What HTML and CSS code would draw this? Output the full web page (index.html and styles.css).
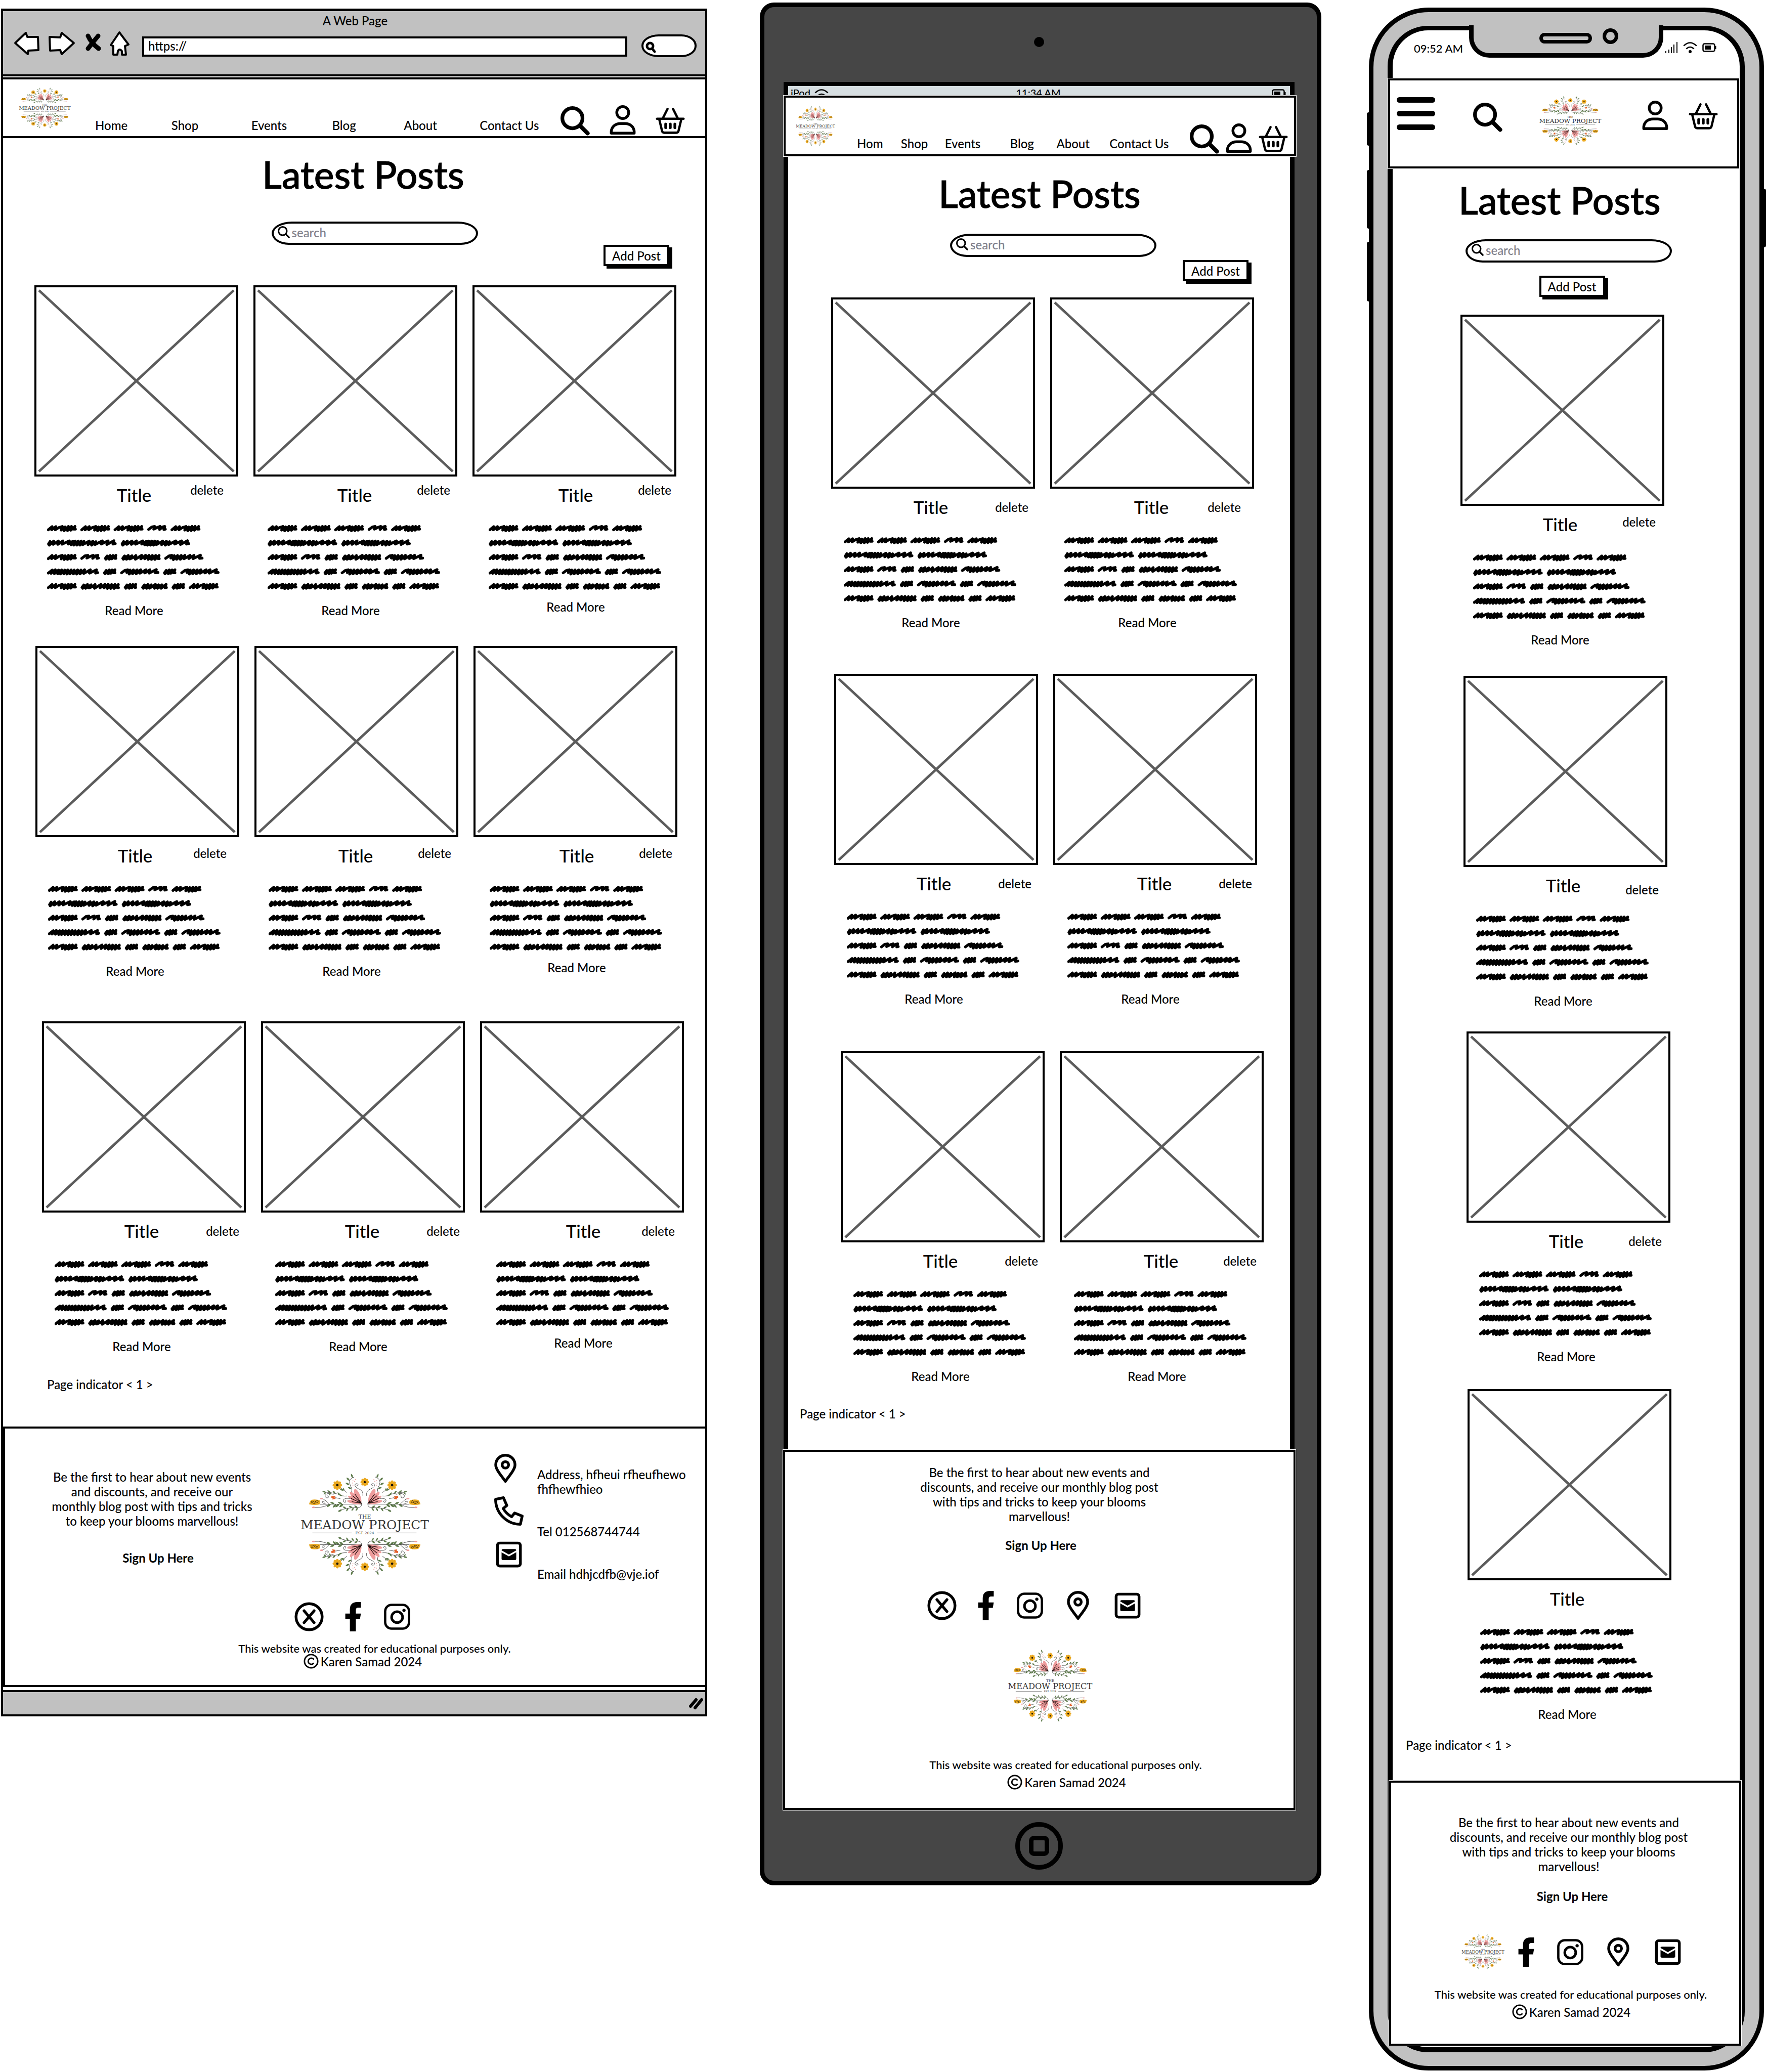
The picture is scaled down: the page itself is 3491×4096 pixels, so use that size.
FILE: index.html
```html
<!DOCTYPE html>
<html lang="en">
<head>
<meta charset="utf-8">
<title>The Meadow Project – Blog wireframes</title>
<meta name="viewport" content="width=device-width, initial-scale=1">
<link rel="stylesheet" href="styles.css">
</head>
<body>
<svg class="sprite" aria-hidden="true">
  <defs>
    <!-- scribbled words -->
    <g id="w-a"><path d="M8 31L33 10L30 31L58 10L54 31L78 16L100 9L92 33L118 12L112 37L140 9L134 36L160 9L155 34L183 9L176 27L186 27"/></g>
    <g id="w-b"><path d="M8 29L30 12L48 9L42 27L68 14L84 9L80 29L100 12L114 9L108 29L118 27"/></g>
    <g id="w-c"><path d="M10 29L22 13L14 35L42 10L36 35L60 10L52 32L79 9L72 29L79 29"/></g>
    <g id="w-d"><path d="M10 29L22 13L14 35L46 10L34 35L70 12L56 33L86 20L96 10L92 35L134 9L128 32L160 9L154 32L182 9L176 36L204 10L198 36L226 10L220 36L248 10L242 31L249 31"/></g>
    <g id="w-e"><path d="M8 29L30 13L48 9L42 27L64 11L58 37L86 10L80 35L110 10L104 35L134 9L128 32L168 9L160 30L194 9L188 31L236 8L230 29L247 27"/></g>
    <g id="w-f"><path d="M10 29L20 13L14 37L44 10L40 32L74 10L70 32L104 9L98 31L146 9L138 30L170 11L158 35L184 10L176 37L204 10L196 37L224 10L216 37L242 12L234 34L276 10L268 34L300 11L292 37L320 14L314 33L362 9L354 30L400 9L392 33L438 8L432 30L447 27"/></g>
    <g id="w-g"><path d="M8 31L34 11L26 33L54 9L48 34L76 11L70 36L96 10L88 36L116 11L110 36L136 10L130 37L158 10L150 36L178 11L172 36L200 10L194 37L222 11L216 36L246 9L240 33L284 9L278 31L324 9L318 31L332 28"/></g>
    <g id="w-h"><path d="M10 29L22 13L14 35L44 10L36 35L66 12L56 34L94 9L88 35L114 12L108 35L136 12L130 35L164 9L156 31L166 30"/></g>
  </defs>
  <symbol id="scribble" viewBox="36 46 1130 426" preserveAspectRatio="none">
    <g fill="none" stroke="#000" stroke-width="18" stroke-linejoin="round" stroke-linecap="round">
      <use href="#w-a" x="36" y="46"/><use href="#w-a" x="255" y="46"/><use href="#w-a" x="473" y="46"/><use href="#w-b" x="693" y="46"/><use href="#w-a" x="846" y="46"/>
      <use href="#w-f" x="36" y="141"/><use href="#w-f" x="518" y="141"/>
      <use href="#w-a" x="36" y="236"/><use href="#w-b" x="255" y="236"/><use href="#w-c" x="408" y="236"/><use href="#w-d" x="522" y="236"/><use href="#w-e" x="805" y="236"/>
      <use href="#w-g" x="36" y="331"/><use href="#w-c" x="402" y="331"/><use href="#w-e" x="516" y="331"/><use href="#w-c" x="795" y="331"/><use href="#w-e" x="910" y="331"/>
      <use href="#w-a" x="36" y="427"/><use href="#w-d" x="255" y="427"/><use href="#w-c" x="538" y="427"/><use href="#w-h" x="652" y="427"/><use href="#w-c" x="851" y="427"/><use href="#w-a" x="965" y="427"/>
    </g>
  </symbol>
  <symbol id="cross" viewBox="0 0 395 370" preserveAspectRatio="none">
    <path d="M5 6L390 364M390 6L5 364" fill="none" stroke="#5c5c5c" stroke-width="5"/>
  </symbol>
  <!-- logo artwork -->
  <defs>
    <g id="daisy">
      <g fill="#eaa81f">
        <ellipse cy="-19" rx="9" ry="12"/><ellipse cy="-19" rx="9" ry="12" transform="rotate(45)"/><ellipse cy="-19" rx="9" ry="12" transform="rotate(90)"/><ellipse cy="-19" rx="9" ry="12" transform="rotate(135)"/><ellipse cy="-19" rx="9" ry="12" transform="rotate(180)"/><ellipse cy="-19" rx="9" ry="12" transform="rotate(225)"/><ellipse cy="-19" rx="9" ry="12" transform="rotate(270)"/><ellipse cy="-19" rx="9" ry="12" transform="rotate(315)"/><circle r="14"/>
      </g>
      <circle r="8" fill="#16110a"/>
    </g>
    <path id="leaf" d="M0 0Q10 -13 32 -4Q16 12 0 0Z"/>
    <g id="spray">
      <g fill="none" stroke="#1c1c1c" stroke-width="2.5" stroke-linecap="round">
        <path d="M447 304L176 305"/>
        <path d="M447 300Q450 330 412 328Q350 325 296 348"/>
        <path d="M350 251Q320 255 290 238Q240 225 196 225"/>
        <path d="M380 225Q390 210 372 180Q355 140 397 127"/>
        <path d="M350 228L312 198"/>
        <path d="M455 248Q460 215 425 203Q398 190 404 175Q414 165 424 175Q422 186 414 180"/>
        <path d="M372 268Q340 262 328 276Q326 294 340 293Q348 286 340 280"/>
        <path d="M262 240Q215 225 207 250Q212 268 228 262Q234 252 224 250"/>
        <path d="M235 304Q205 272 188 268M215 304Q186 300 188 288Q196 282 204 290M235 306Q190 330 140 326"/>
        <path d="M306 268L275 262"/>
      </g>
      <g fill="#5d7a4a">
        <use href="#leaf" transform="translate(270 304) rotate(-150)"/><use href="#leaf" transform="translate(320 304) rotate(-150)"/><use href="#leaf" transform="translate(245 304) rotate(150)"/><use href="#leaf" transform="translate(300 305) rotate(150)"/><use href="#leaf" transform="translate(280 305) rotate(140)"/><use href="#leaf" transform="translate(326 305) rotate(150)"/>
        <use href="#leaf" transform="translate(318 340) rotate(155) scale(.9)"/><use href="#leaf" transform="translate(345 331) rotate(-150) scale(.8)"/><use href="#leaf" transform="translate(360 330) rotate(130) scale(.8)"/><use href="#leaf" transform="translate(385 328) rotate(-145) scale(.8)"/><use href="#leaf" transform="translate(395 328) rotate(130) scale(.8)"/><use href="#leaf" transform="translate(420 328) rotate(-140) scale(.8)"/><use href="#leaf" transform="translate(422 328) rotate(130) scale(.8)"/>
        <use href="#leaf" transform="translate(214 226) rotate(-160) scale(.8)"/><use href="#leaf" transform="translate(214 226) rotate(140) scale(.7)"/><use href="#leaf" transform="translate(244 228) rotate(-140) scale(.8)"/><use href="#leaf" transform="translate(246 229) rotate(130) scale(.7)"/><use href="#leaf" transform="translate(275 234) rotate(-130) scale(.8)"/><use href="#leaf" transform="translate(305 247) rotate(-120) scale(.8)"/><use href="#leaf" transform="translate(318 250) rotate(-150) scale(.7)"/>
        <use href="#leaf" transform="translate(388 132) rotate(-105) scale(.9)"/><use href="#leaf" transform="translate(368 150) rotate(-130) scale(.9)"/><use href="#leaf" transform="translate(366 178) rotate(-145) scale(.9)"/><use href="#leaf" transform="translate(380 204) rotate(-150) scale(.8)"/><use href="#leaf" transform="translate(330 214) rotate(-160) scale(.8)"/><use href="#leaf" transform="translate(332 216) rotate(-100) scale(.6)"/>
      </g>
      <g fill="#ee9c9c">
        <ellipse cx="421" cy="252" rx="17" ry="50" transform="rotate(-22 421 252)"/><ellipse cx="405" cy="262" rx="14" ry="50" transform="rotate(-42 405 262)"/><ellipse cx="400" cy="275" rx="12" ry="48" transform="rotate(-60 400 275)"/><ellipse cx="398" cy="291" rx="12" ry="46" transform="rotate(-80 398 291)"/>
        <ellipse cx="185" cy="268" rx="10" ry="5"/><ellipse cx="133" cy="325" rx="10" ry="5"/>
        <circle cx="390" cy="151" r="3"/><circle cx="407" cy="143" r="3"/><circle cx="387" cy="166" r="3"/><circle cx="401" cy="155" r="3"/><circle cx="390" cy="180" r="3"/>
      </g>
      <path d="M446 299L404 240M446 299L388 250M446 299L376 266M446 299L384 288" fill="none" stroke="#1c0c0c" stroke-width="4" stroke-linecap="round"/>
      <path d="M103 305Q108 284 118 276Q150 270 172 280Q180 292 172 306Q140 314 103 305Z" fill="#eaa81f"/>
      <path d="M116 288q9-8 16 0t16-2t16 2M114 298q9-8 16 0t16-2t18 2" fill="none" stroke="#16110a" stroke-width="3"/>
      <path d="M250 250L276 252L270 262L278 270L254 274L258 264L248 262Z" fill="#e2622c"/>
      <use href="#daisy" transform="translate(288 180)"/>
    </g>
    <g id="half-wreath">
      <use href="#spray"/>
      <use href="#spray" transform="translate(934 0) scale(-1 1)"/>
      <use href="#daisy" transform="translate(467 160) scale(.9)"/>
    </g>
  </defs>
  <symbol id="wreath" viewBox="34 104 866 666" preserveAspectRatio="none">
    <use href="#half-wreath"/>
    <use href="#half-wreath" transform="translate(0 874) scale(1 -1)"/>
  </symbol>
  <!-- interface icons -->
  <symbol id="i-search" viewBox="0 0 64 64"><g fill="none" stroke="#000" stroke-linecap="round"><circle cx="26" cy="26" r="22" stroke-width="8"/><path d="M43 43L59 59" stroke-width="9"/></g></symbol>
  <symbol id="i-user" viewBox="0 0 64 64"><g fill="none" stroke="#000" stroke-width="6" stroke-linejoin="round"><circle cx="32" cy="16" r="13"/><path d="M7 61V57C8 47 16 40 27 40H37C48 40 56 47 57 57V61Z"/></g></symbol>
  <symbol id="i-basket" viewBox="0 0 64 64"><g fill="none" stroke="#000" stroke-width="5" stroke-linecap="round" stroke-linejoin="round"><path d="M3 29.500H61M26 8L16 28M38 8L48 28M8 31L14 56Q15 60 19 60H45Q49 60 50 56L56 31"/><path d="M22 41V49M32 41V49M42 41V49" stroke-width="6"/></g></symbol>
  <symbol id="i-pin" viewBox="0 0 48 64"><g fill="none" stroke="#000" stroke-width="6" stroke-linejoin="round"><path d="M24 60C14 46 3 34 3 24A21 21 0 0 1 45 24C45 34 34 46 24 60Z"/><circle cx="24" cy="24" r="7"/></g></symbol>
  <symbol id="i-phone" viewBox="0 0 64 64"><path d="M3 6.500L20 3L27.500 20L19.500 26.500Q26 38 38 44.500L44.500 36.500L61 43L57 61C27 61 3 36 3 6.500Z" fill="none" stroke="#000" stroke-width="6" stroke-linejoin="round"/></symbol>
  <symbol id="i-mail" viewBox="0 0 64 64"><rect x="7" y="7" width="50" height="50" rx="5" fill="none" stroke="#000" stroke-width="6"/><rect x="16" y="20" width="32" height="24" rx="3"/><path d="M14 24L32 34L50 24" fill="none" stroke="#fff" stroke-width="3.500"/></symbol>
  <symbol id="i-x" viewBox="0 0 64 64"><g fill="none" stroke="#000" stroke-linecap="round"><circle cx="32" cy="32" r="28.500" stroke-width="6"/><path d="M21 19L43 45M43 19L21 45" stroke-width="6"/></g></symbol>
  <symbol id="i-facebook" viewBox="0 0 64 64"><path d="M49 0V12H43Q38 12 38 18V25H49L47 37H38V64H25V37H15V25H25V16Q25 0 41 0Z"/></symbol>
  <symbol id="i-instagram" viewBox="0 0 64 64"><g fill="none" stroke="#000"><rect x="6" y="6" width="52" height="52" rx="14" stroke-width="5"/><circle cx="32" cy="33" r="12" stroke-width="5.500"/></g><circle cx="47" cy="18" r="3.500"/></symbol>
  <symbol id="i-copyright" viewBox="0 0 32 32"><g fill="none" stroke="#000" stroke-width="3" stroke-linecap="round"><circle cx="16" cy="16" r="14"/><path d="M21 11.500A6.500 6.500 0 1 0 21 20.500"/></g></symbol>
  <symbol id="i-menu" viewBox="0 0 76 65"><path d="M5.500 5.500H70.500M5.500 32.500H70.500M5.500 59.500H70.500" stroke="#000" stroke-width="11" stroke-linecap="round"/></symbol>
  <symbol id="i-wifi" viewBox="0 0 28 24"><g fill="none" stroke="#000" stroke-width="2.500" stroke-linecap="round"><path d="M2 8Q14 -3 26 8M7 14Q14 8 21 14"/></g><circle cx="14" cy="20" r="3"/></symbol>
  <symbol id="i-battery" viewBox="0 0 28 18"><rect x="1.500" y="1.500" width="23" height="15" rx="3" fill="none" stroke="#000" stroke-width="2.500"/><path d="M5 5H17V13H5ZM25 6H27.500V12H25Z"/></symbol>
  <symbol id="i-signal" viewBox="0 0 26 24"><path d="M2 19V23M8 16V23M13 11V23M18 6V23M24 1V23" stroke="#000" stroke-width="2" fill="none"/></symbol>
</svg>

<main class="board">

  <!-- desktop -->
  <section class="browser" aria-label="Desktop wireframe">
    <div class="chrome">
      <p class="chrome-title">A Web Page</p>
      <div class="toolbar">
        <button class="plain" aria-label="Back"><svg width="52" height="48" viewBox="0 0 52 48"><path d="M3 23L24 3L27 11H48L49 37L29 38L28 45Z" fill="#fff" stroke="#000" stroke-width="4" stroke-linejoin="round"/></svg></button>
        <button class="plain" aria-label="Forward"><svg width="54" height="48" viewBox="0 0 54 48"><path d="M51 23L27 3L24 12L3 11L4 38L24 37L27 45Z" fill="#fff" stroke="#000" stroke-width="4" stroke-linejoin="round"/></svg></button>
        <button class="plain" aria-label="Stop"><svg width="35" height="48" viewBox="0 0 35 48"><path d="M9 9Q15 23 30 34M29 9Q20 20 9 34" fill="none" stroke="#000" stroke-width="9" stroke-linecap="round"/></svg></button>
        <button class="plain" aria-label="Home"><svg width="41" height="50" viewBox="0 0 41 50"><path d="M20 3L38 27L31 30L33 47H25V40Q20 34 17 40L16 47H8V30L3 28Z" fill="#fff" stroke="#000" stroke-width="4" stroke-linejoin="round"/></svg></button>
        <input class="url" type="text" value="https://" aria-label="Address">
        <label class="finder"><svg width="22" height="24" viewBox="0 0 22 24"><g fill="none" stroke="#000" stroke-width="5" stroke-linecap="round"><circle cx="9" cy="9" r="6"/><path d="M14 15L18 20"/></g></svg><input type="text" aria-label="Quick search"></label>
      </div>
    </div>

    <header class="site-header">
      <svg class="logo logo--header" role="img" aria-label="The Meadow Project"><use href="#wreath" width="100%" height="100%"/><svg class="wordmark" viewBox="34 104 866 666" width="100%" height="100%"><text x="467" y="400" font-size="36">THE</text><text x="467" y="468" font-size="82">MEADOW PROJECT</text><text x="467" y="500" font-size="24">EST. 2024</text><path d="M124 493H382M548 493H806"/></svg></svg>
      <nav class="nav"><a href="#">Home</a><a href="#">Shop</a><a href="#">Events</a><a href="#">Blog</a><a href="#">About</a><a href="#">Contact Us</a></nav>
      <div class="tools">
        <button class="plain tool-search" aria-label="Search"><svg class="icon"><use href="#i-search"/></svg></button>
        <button class="plain" aria-label="Account"><svg class="icon"><use href="#i-user"/></svg></button>
        <button class="plain" aria-label="Basket"><svg class="icon"><use href="#i-basket"/></svg></button>
      </div>
    </header>

    <div class="page">
      <h1>Latest Posts</h1>
      <div class="search-row"><label class="search"><svg width="24" height="24"><use href="#i-search"/></svg><input type="search" placeholder="search" aria-label="Search posts"></label></div>
      <div class="add-row"><button class="add">Add Post</button></div>

      <div class="posts posts--first">
        <article class="post"><svg class="thumb"><use href="#cross"/></svg><div class="post-body"><div class="post-head"><h2>Title</h2><a class="delete end-4" href="#">delete</a></div><svg class="copy"><use href="#scribble"/></svg><a class="more" href="#">Read More</a></div></article>
        <article class="post"><svg class="thumb"><use href="#cross"/></svg><div class="post-body"><div class="post-head"><h2>Title</h2><a class="delete end-2" href="#">delete</a></div><svg class="copy"><use href="#scribble"/></svg><a class="more" href="#">Read More</a></div></article>
        <article class="post"><svg class="thumb"><use href="#cross"/></svg><div class="post-body"><div class="post-head"><h2>Title</h2><a class="delete end-2" href="#">delete</a></div><svg class="copy"><use href="#scribble"/></svg><a class="more" href="#">Read More</a></div></article>
      </div>
      <div class="posts posts--second">
        <article class="post"><svg class="thumb"><use href="#cross"/></svg><div class="post-body"><div class="post-head"><h2>Title</h2><a class="delete end-3" href="#">delete</a></div><svg class="copy"><use href="#scribble"/></svg><a class="more" href="#">Read More</a></div></article>
        <article class="post"><svg class="thumb"><use href="#cross"/></svg><div class="post-body"><div class="post-head"><h2>Title</h2><a class="delete end-2" href="#">delete</a></div><svg class="copy"><use href="#scribble"/></svg><a class="more" href="#">Read More</a></div></article>
        <article class="post"><svg class="thumb"><use href="#cross"/></svg><div class="post-body"><div class="post-head"><h2>Title</h2><a class="delete end-2" href="#">delete</a></div><svg class="copy"><use href="#scribble"/></svg><a class="more" href="#">Read More</a></div></article>
      </div>
      <div class="posts posts--third">
        <article class="post"><svg class="thumb"><use href="#cross"/></svg><div class="post-body"><div class="post-head"><h2>Title</h2><a class="delete end-1" href="#">delete</a></div><svg class="copy"><use href="#scribble"/></svg><a class="more" href="#">Read More</a></div></article>
        <article class="post"><svg class="thumb"><use href="#cross"/></svg><div class="post-body"><div class="post-head"><h2>Title</h2><a class="delete end-1" href="#">delete</a></div><svg class="copy"><use href="#scribble"/></svg><a class="more" href="#">Read More</a></div></article>
        <article class="post"><svg class="thumb"><use href="#cross"/></svg><div class="post-body"><div class="post-head"><h2>Title</h2><a class="delete end-3" href="#">delete</a></div><svg class="copy"><use href="#scribble"/></svg><a class="more" href="#">Read More</a></div></article>
      </div>
      <p class="pager">Page indicator &lt; 1 &gt;</p>
    </div>

    <footer class="site-footer">
      <div class="footer-columns">
        <div class="signup">
          <p>Be the first to hear about new events and discounts, and receive our monthly blog post with tips and tricks to keep your blooms marvellous!</p>
          <a href="#">Sign Up Here</a>
        </div>
        <svg class="logo logo--large" role="img" aria-label="The Meadow Project"><use href="#wreath" width="100%" height="100%"/><svg class="wordmark" viewBox="34 104 866 666" width="100%" height="100%"><text x="467" y="400" font-size="36">THE</text><text x="467" y="468" font-size="82">MEADOW PROJECT</text><text x="467" y="500" font-size="24">EST. 2024</text><path d="M124 493H382M548 493H806"/></svg></svg>
        <ul class="contact">
          <li><svg class="icon icon--pin"><use href="#i-pin"/></svg><span>Address, hfheui rfheufhewo fhfhewfhieo</span></li>
          <li><svg class="icon"><use href="#i-phone"/></svg><span>Tel 012568744744</span></li>
          <li><svg class="icon"><use href="#i-mail"/></svg><span>Email hdhjcdfb@vje.iof</span></li>
        </ul>
      </div>
      <div class="social">
        <a href="#" aria-label="X"><svg class="icon"><use href="#i-x"/></svg></a>
        <a href="#" aria-label="Facebook"><svg class="icon"><use href="#i-facebook"/></svg></a>
        <a href="#" aria-label="Instagram"><svg class="icon"><use href="#i-instagram"/></svg></a>
      </div>
      <p class="legal">This website was created for educational purposes only.</p>
      <p class="owner"><svg width="30" height="30" role="img" aria-label="Copyright"><use href="#i-copyright"/></svg>Karen Samad 2024</p>
    </footer>
    <div class="statusbar"><svg width="28" height="25" viewBox="0 0 28 25"><path d="M3 18L14 5M12 21L25 5" stroke="#000" stroke-width="6" stroke-linecap="round"/></svg></div>
  </section>

  <!-- tablet -->
  <section class="tablet" aria-label="Tablet wireframe">
    <div class="camera"></div>
    <div class="tablet-screen">
      <div class="tablet-status"><span class="carrier">iPod <svg width="28" height="24"><use href="#i-wifi"/></svg></span><span>11:34 AM</span><svg width="28" height="18"><use href="#i-battery"/></svg></div>
      <header class="site-header">
        <svg class="logo logo--header" role="img" aria-label="The Meadow Project"><use href="#wreath" width="100%" height="100%"/><svg class="wordmark" viewBox="34 104 866 666" width="100%" height="100%"><text x="467" y="400" font-size="36">THE</text><text x="467" y="468" font-size="82">MEADOW PROJECT</text><text x="467" y="500" font-size="24">EST. 2024</text><path d="M124 493H382M548 493H806"/></svg></svg>
        <nav class="nav"><a href="#">Hom</a><a href="#">Shop</a><a href="#">Events</a><a href="#">Blog</a><a href="#">About</a><a href="#">Contact Us</a></nav>
        <div class="tools">
          <button class="plain tool-search" aria-label="Search"><svg class="icon"><use href="#i-search"/></svg></button>
          <button class="plain" aria-label="Account"><svg class="icon"><use href="#i-user"/></svg></button>
          <button class="plain" aria-label="Basket"><svg class="icon"><use href="#i-basket"/></svg></button>
        </div>
      </header>
      <div class="page">
        <h1>Latest Posts</h1>
        <div class="search-row"><label class="search"><svg width="24" height="24"><use href="#i-search"/></svg><input type="search" placeholder="search" aria-label="Search posts"></label></div>
        <div class="add-row"><button class="add">Add Post</button></div>
        <div class="posts posts--first">
          <article class="post"><svg class="thumb"><use href="#cross"/></svg><div class="post-body"><div class="post-head"><h2>Title</h2><a class="delete end-1" href="#">delete</a></div><svg class="copy"><use href="#scribble"/></svg><a class="more" href="#">Read More</a></div></article>
          <article class="post"><svg class="thumb"><use href="#cross"/></svg><div class="post-body"><div class="post-head"><h2>Title</h2><a class="delete end-4" href="#">delete</a></div><svg class="copy"><use href="#scribble"/></svg><a class="more" href="#">Read More</a></div></article>
        </div>
        <div class="posts posts--second">
          <article class="post"><svg class="thumb"><use href="#cross"/></svg><div class="post-body"><div class="post-head"><h2>Title</h2><a class="delete end-1" href="#">delete</a></div><svg class="copy"><use href="#scribble"/></svg><a class="more" href="#">Read More</a></div></article>
          <article class="post"><svg class="thumb"><use href="#cross"/></svg><div class="post-body"><div class="post-head"><h2>Title</h2><a class="delete end-1" href="#">delete</a></div><svg class="copy"><use href="#scribble"/></svg><a class="more" href="#">Read More</a></div></article>
        </div>
        <div class="posts posts--third">
          <article class="post"><svg class="thumb"><use href="#cross"/></svg><div class="post-body"><div class="post-head"><h2>Title</h2><a class="delete end-1" href="#">delete</a></div><svg class="copy"><use href="#scribble"/></svg><a class="more" href="#">Read More</a></div></article>
          <article class="post"><svg class="thumb"><use href="#cross"/></svg><div class="post-body"><div class="post-head"><h2>Title</h2><a class="delete end-2" href="#">delete</a></div><svg class="copy"><use href="#scribble"/></svg><a class="more" href="#">Read More</a></div></article>
        </div>
        <p class="pager">Page indicator &lt; 1 &gt;</p>
      </div>
      <footer class="site-footer">
        <div class="signup">
          <p>Be the first to hear about new events and discounts, and receive our monthly blog post with tips and tricks to keep your blooms marvellous!</p>
          <a href="#">Sign Up Here</a>
        </div>
        <div class="social">
          <a href="#" aria-label="X"><svg class="icon"><use href="#i-x"/></svg></a>
          <a href="#" aria-label="Facebook"><svg class="icon"><use href="#i-facebook"/></svg></a>
          <a href="#" aria-label="Instagram"><svg class="icon"><use href="#i-instagram"/></svg></a>
          <span class="reach"><a href="#" aria-label="Find us"><svg class="icon"><use href="#i-pin"/></svg></a><a href="#" aria-label="Email us"><svg class="icon"><use href="#i-mail"/></svg></a></span>
        </div>
        <div class="footer-logo"><svg class="logo logo--medium" role="img" aria-label="The Meadow Project"><use href="#wreath" width="100%" height="100%"/><svg class="wordmark" viewBox="34 104 866 666" width="100%" height="100%"><text x="467" y="400" font-size="36">THE</text><text x="467" y="468" font-size="82">MEADOW PROJECT</text><text x="467" y="500" font-size="24">EST. 2024</text><path d="M124 493H382M548 493H806"/></svg></svg></div>
        <p class="legal">This website was created for educational purposes only.</p>
        <p class="owner"><svg width="30" height="30" role="img" aria-label="Copyright"><use href="#i-copyright"/></svg>Karen Samad 2024</p>
      </footer>
    </div>
    <button class="home-button" aria-label="Home"><span></span></button>
  </section>

  <!-- phone -->
  <section class="phone" aria-label="Phone wireframe">
    <i class="side side--mute"></i><i class="side side--up"></i><i class="side side--down"></i><i class="side side--power"></i>
    <div class="phone-screen">
      <div class="notch"><i class="speaker"></i><i class="lens"></i></div>
      <div class="phone-status"><span>09:52 AM</span><span class="signals"><svg width="26" height="24"><use href="#i-signal"/></svg><svg width="28" height="24"><use href="#i-wifi"/></svg><svg width="28" height="18"><use href="#i-battery"/></svg></span></div>
      <header class="phone-header">
        <button class="plain tool-menu" aria-label="Menu"><svg width="76" height="65"><use href="#i-menu"/></svg></button>
        <button class="plain tool-search" aria-label="Search"><svg class="icon"><use href="#i-search"/></svg></button>
        <svg class="logo" role="img" aria-label="The Meadow Project"><use href="#wreath" width="100%" height="100%"/><svg class="wordmark" viewBox="34 104 866 666" width="100%" height="100%"><text x="467" y="400" font-size="36">THE</text><text x="467" y="468" font-size="82">MEADOW PROJECT</text><text x="467" y="500" font-size="24">EST. 2024</text><path d="M124 493H382M548 493H806"/></svg></svg>
        <button class="plain tool-account" aria-label="Account"><svg class="icon"><use href="#i-user"/></svg></button>
        <button class="plain tool-account" aria-label="Basket"><svg class="icon"><use href="#i-basket"/></svg></button>
      </header>
      <div class="page">
        <h1>Latest Posts</h1>
        <div class="search-row"><label class="search"><svg width="24" height="24"><use href="#i-search"/></svg><input type="search" placeholder="search" aria-label="Search posts"></label></div>
        <div class="add-row"><button class="add">Add Post</button></div>
        <div class="posts posts--first"><article class="post"><svg class="thumb"><use href="#cross"/></svg><div class="post-body"><div class="post-head"><h2>Title</h2><a class="delete end-2" href="#">delete</a></div><svg class="copy"><use href="#scribble"/></svg><a class="more" href="#">Read More</a></div></article></div>
        <div class="posts posts--second"><article class="post"><svg class="thumb"><use href="#cross"/></svg><div class="post-body"><div class="post-head"><h2>Title</h2><a class="delete end-2" href="#">delete</a></div><svg class="copy"><use href="#scribble"/></svg><a class="more" href="#">Read More</a></div></article></div>
        <div class="posts posts--third"><article class="post"><svg class="thumb"><use href="#cross"/></svg><div class="post-body"><div class="post-head"><h2>Title</h2><a class="delete end-2" href="#">delete</a></div><svg class="copy"><use href="#scribble"/></svg><a class="more" href="#">Read More</a></div></article></div>
        <div class="posts posts--fourth"><article class="post"><svg class="thumb"><use href="#cross"/></svg><div class="post-body"><div class="post-head"><h2>Title</h2></div><svg class="copy"><use href="#scribble"/></svg><a class="more" href="#">Read More</a></div></article></div>
        <p class="pager">Page indicator &lt; 1 &gt;</p>
      </div>
      <footer class="site-footer">
        <div class="signup">
          <p>Be the first to hear about new events and discounts, and receive our monthly blog post with tips and tricks to keep your blooms marvellous!</p>
          <a href="#">Sign Up Here</a>
        </div>
        <div class="social">
          <svg class="logo logo--small" role="img" aria-label="The Meadow Project"><use href="#wreath" width="100%" height="100%"/><svg class="wordmark" viewBox="34 104 866 666" width="100%" height="100%"><text x="467" y="400" font-size="36">THE</text><text x="467" y="468" font-size="82">MEADOW PROJECT</text><text x="467" y="500" font-size="24">EST. 2024</text><path d="M124 493H382M548 493H806"/></svg></svg>
          <a href="#" aria-label="Facebook"><svg class="icon"><use href="#i-facebook"/></svg></a>
          <a href="#" aria-label="Instagram"><svg class="icon"><use href="#i-instagram"/></svg></a>
          <span class="reach"><a href="#" aria-label="Find us"><svg class="icon"><use href="#i-pin"/></svg></a><a href="#" aria-label="Email us"><svg class="icon"><use href="#i-mail"/></svg></a></span>
        </div>
        <p class="legal">This website was created for educational purposes only.</p>
        <p class="owner"><svg width="30" height="30" role="img" aria-label="Copyright"><use href="#i-copyright"/></svg>Karen Samad 2024</p>
      </footer>
    </div>
  </section>
</main>
</body>
</html>
```
FILE: styles.css
```css
*, *::before, *::after { box-sizing: border-box; }

:root {
  --ink: #000;
  --grey: #c1c1c1;
  --slate: #464646;
  --line: 4px solid var(--ink);
}

body {
  margin: 0;
  background: #fff;
  color: var(--ink);
  font: 500 24px/29px Lato, "Liberation Sans", sans-serif;
}

h1, h2, p, ul { margin: 0; padding: 0; font-weight: 500; }
ul { list-style: none; }
a { color: inherit; text-decoration: none; }
svg { display: block; flex: none; }
button, input { font: inherit; color: inherit; }
.sprite { position: absolute; width: 0; height: 0; }
.plain { display: block; padding: 0; border: 0; background: none; }
.icon { width: 58px; height: 58px; }
.wordmark { overflow: visible; font-family: "DejaVu Serif", serif; font-weight: 400; fill: #333; text-anchor: middle; }
.wordmark path { stroke: #444; stroke-width: 3px; }

.board {
  display: grid;
  grid-template-columns: 1410fr 1110fr 789fr;
  column-gap: 90px;
  align-items: start;
  padding-left: 2px;
}

/* shared site header */
.site-header {
  position: relative;
  display: flex;
  align-items: flex-start;
  height: 120px;
  border: var(--line);
  background: #fff;
}
.nav { flex: 1; display: grid; padding-top: 76px; white-space: nowrap; }
.tools { display: flex; padding-top: 48px; }
.tools .tool-search { margin-top: 5px; }

/* shared page content */
h1 { font-size: 75px; line-height: 80px; text-align: center; -webkit-text-stroke: 1px var(--ink); }
.search-row { display: flex; justify-content: center; }
.search {
  display: flex;
  align-items: center;
  gap: 4px;
  width: 408px;
  height: 46px;
  padding: 0 8px 4px;
  border: var(--line);
  border-radius: 40px 40px 34px 34px / 23px;
}
.search input { flex: 1; min-width: 0; padding: 0; border: 0; outline: 0; background: none; }
.search input::placeholder { color: #80808a; opacity: 1; }
.add-row { display: flex; justify-content: flex-end; }
.add {
  width: 130px;
  height: 42px;
  padding: 0;
  border: var(--line);
  background: #fff;
  box-shadow: 6px 5px 0 var(--ink);
}

.posts { display: grid; column-gap: 30px; }
.thumb { width: 100%; height: auto; aspect-ratio: 403 / 378; border: var(--line); }
.post-body { display: flex; flex-direction: column; padding-right: 9px; }
.post:nth-child(2) .post-body { padding: 0 6px 0 3px; }
.post:nth-child(3) .post-body { padding: 0 2px 0 7px; }
.post-head { display: grid; margin-top: 14px; height: 43px; }
.post-head > * { grid-area: 1 / 1; }
h2 { padding-top: 2px; font-size: 35px; line-height: 40px; text-align: center; }
.delete { justify-self: end; align-self: start; line-height: 26px; }
.end-1 { margin-right: 4px; }
.end-2 { margin-right: 8px; }
.end-3 { margin-right: 16px; }
.end-4 { margin-right: 20px; }
.copy { width: auto; height: 128px; margin: 39px 28px 0 25px; }
.more { align-self: center; margin-top: 27px; line-height: 28px; }
.post:nth-child(2) .more { padding-right: 16px; }
.post:nth-child(3) .more { margin-top: 20px; }
.pager { line-height: 28px; }

/* shared footer */
.site-footer { position: relative; border: var(--line); background: #fff; }
.signup { display: flex; flex-direction: column; align-items: center; text-align: center; }
.signup a { font-weight: 700; line-height: 28px; }
.social { display: flex; justify-content: center; align-items: center; gap: 29px; }
.reach { display: flex; gap: 40px; margin-left: 8px; }
.legal { font-size: 22px; line-height: 25px; text-align: center; white-space: nowrap; }
.owner { display: flex; justify-content: center; align-items: center; gap: 4px; height: 26px; }

/* desktop */
.browser { margin: 17px 14px 0 0; border: var(--line); border-top-width: 5px; }
.chrome { padding: 5px 17px 0 21px; height: 129px; border-bottom: var(--line); background: var(--grey); }
.chrome-title { text-align: center; line-height: 28px; }
.toolbar { display: flex; align-items: center; gap: 16px; height: 58px; margin-top: 4px; }
.toolbar .plain { padding-bottom: 4px; }
.url {
  flex: 1;
  min-width: 0;
  height: 40px;
  margin: 8px 12px 0 8px;
  padding: 0 8px 4px;
  border: var(--line);
  background: #fff;
}
.finder {
  display: flex;
  align-items: center;
  width: 109px;
  height: 45px;
  margin-top: 5px;
  padding: 6px 4px 0;
  border: var(--line);
  border-radius: 34px 30px 30px 34px / 22px;
  background: #fff;
}
.finder input { width: 100%; min-width: 0; border: 0; outline: 0; background: none; }

.browser .site-header { margin: 2px -4px 0; }
.browser .logo--header { width: 111px; height: 81px; margin: 16px 44px 0 27px; }
.browser .nav { grid-template-columns: 151fr 158fr 160fr 142fr 150fr 160fr; }
.browser .tools { gap: 36px; padding-right: 40px; }
.browser h1 { padding: 31px 0 0 36px; }
.browser .search-row { padding: 54px 0 0 81px; }
.browser .add-row { padding-right: 71px; }
.browser .posts { grid-template-columns: repeat(3, 1fr); }
.browser .posts--first { padding: 38px 57px 0 62px; }
.browser .posts--second { padding: 56px 55px 0 64px; }
.browser .posts--second .delete { margin-top: 5px; }
.browser .posts--third { padding: 85px 42px 0 77px; }
.browser .posts--third .delete { margin-top: 10px; }
.browser .pager { padding: 47px 0 69px 87px; }

.browser .site-footer { margin-right: -4px; padding-bottom: 34px; }
.footer-columns {
  display: grid;
  grid-template-columns: 492fr 387fr 412fr;
  align-items: start;
  padding: 50px 5px 0 88px;
}
.browser .signup { width: 405px; padding-top: 31px; }
.browser .signup a { margin-top: 45px; padding-left: 24px; }
.logo--large { width: 262px; height: 201px; margin-top: 39px; }
.contact li { display: grid; grid-template-columns: 58px 1fr; column-gap: 27px; }
.icon--pin { width: 44px; }
.contact li:nth-child(1) span { padding-top: 26px; }
.contact li:nth-child(2) span { padding-top: 55px; }
.contact li:nth-child(3) span { padding-top: 53px; }
.contact li:nth-child(3) { margin-top: 2px; }
.browser .social { padding: 41px 8px 0 0; }
.browser .legal { margin-top: 21px; padding-left: 77px; }
.browser .owner { padding-left: 30px; }
.statusbar {
  display: flex;
  justify-content: flex-end;
  align-items: center;
  height: 48px;
  margin-top: 6px;
  padding-right: 4px;
  border-top: var(--line);
  background: var(--grey);
}

/* tablet */
.tablet {
  margin-top: 5px;
  padding: 59px 44px 22px 38px;
  border: 9px solid var(--ink);
  border-radius: 28px;
  background: var(--slate);
}
.camera { width: 20px; height: 20px; margin: 0 auto 69px; border-radius: 50%; background: var(--ink); }
.tablet-screen { border: 9px solid var(--ink); border-width: 8px 9px 0; background: #fff; }
.tablet-status {
  display: grid;
  grid-template-columns: 1fr auto 1fr;
  height: 19px;
  padding: 0 8px 0 5px;
  overflow: hidden;
  background: #d6dee1;
  font-size: 20px;
  line-height: 26px;
}
.tablet-status svg { margin-top: 5px; }
.tablet-status > svg { justify-self: end; margin-top: 6px; }
.carrier { display: flex; gap: 8px; }
.tablet .site-header { margin: 0 -12px 0 -9px; box-shadow: 0 0 0 1px #fff; }
.tablet .logo--header { width: 80px; height: 80px; margin: 16px 42px 0 19px; }
.tablet .nav { grid-template-columns: 87fr 87fr 129fr 92fr 105fr 159fr; }
.tablet .tools { gap: 10px; padding-right: 12px; }
.tablet h1 { padding: 33px 0 0 2px; }
.tablet .search-row { padding: 40px 0 0 56px; }
.tablet .add-row { padding: 6px 82px 0 0; }
.tablet .posts { grid-template-columns: repeat(2, 1fr); }
.tablet .posts--first { padding: 32px 71px 0 85px; }
.tablet .posts--second { padding: 87px 65px 0 91px; }
.tablet .posts--third { padding: 89px 52px 0 104px; }
.tablet .delete { margin-top: 10px; }
.tablet .pager { padding: 46px 0 57px 23px; }
.tablet .site-footer { margin: 0 -11px 0 -10px; padding: 26px 0 38px; box-shadow: 0 0 0 1px #fff; }
.tablet .signup p { width: 490px; }
.tablet .signup a { margin-top: 29px; padding-left: 6px; }
.tablet .social { padding: 76px 18px 0 0; }
.footer-logo { display: flex; justify-content: center; padding: 58px 0 0 42px; }
.logo--medium { width: 172px; height: 143px; }
.tablet .legal { margin-top: 72px; padding-left: 104px; }
.tablet .owner { margin-top: 9px; padding-left: 108px; }
.home-button {
  display: flex;
  justify-content: center;
  align-items: center;
  width: 94px;
  height: 94px;
  margin: 24px auto 0;
  padding: 0;
  border: 9px solid var(--ink);
  border-radius: 50%;
  background: none;
}
.home-button span { width: 40px; height: 40px; border: 9px solid var(--ink); border-radius: 10px; }

/* phone */
.phone {
  position: relative;
  margin: 15px 4px 0;
  padding: 27px 29px 27px 28px;
  border: 9px solid var(--ink);
  border-radius: 118px;
  background: var(--grey);
}
.side { position: absolute; left: -13px; width: 10px; border-radius: 4px; background: var(--ink); }
.side--mute { top: 198px; height: 66px; }
.side--up { top: 312px; height: 116px; }
.side--down { top: 454px; height: 118px; }
.side--power { top: 349px; left: auto; right: -13px; height: 116px; }
.phone-screen { position: relative; padding-bottom: 3px; border: 10px solid var(--ink); border-top-width: 9px; border-radius: 80px; background: #fff; }
.notch {
  position: absolute;
  top: -10px;
  left: 22%;
  right: 22%;
  display: flex;
  justify-content: center;
  gap: 21px;
  height: 64px;
  padding: 6px 0 0 50px;
  border: 9px solid var(--ink);
  border-top: 0;
  border-radius: 0 0 40px 40px;
  background: var(--grey);
}
.speaker { width: 104px; height: 21px; margin-top: 9px; border: 7px solid var(--ink); border-radius: 10px; }
.lens { width: 31px; height: 31px; border: 7px solid var(--ink); border-radius: 50%; }
.phone-status { display: flex; justify-content: space-between; height: 95px; padding: 22px 46px 0 42px; font-size: 22px; line-height: 28px; }
.signals { display: flex; align-items: center; gap: 10px; height: 24px; }
.phone-header {
  position: relative;
  display: flex;
  align-items: flex-start;
  justify-content: space-between;
  height: 178px;
  margin: 0 1px 0 -9px;
  padding: 31px 38px 0 13px;
  border: var(--line);
  background: #fff;
  box-shadow: 0 0 0 1px #fff;
}
.phone-header .logo { width: 132px; height: 97px; margin: 0 14px 0 8px; }
.tool-menu { margin-top: 2px; }
.phone-header .tool-search { margin: 13px 0 0 16px; }
.tool-account { margin-top: 9px; }
.tool-account + .tool-account { margin-left: -22px; }
.phone h1 { padding: 22px 26px 0 0; }
.phone .search-row { padding: 38px 0 0 10px; }
.phone .add-row { justify-content: center; padding: 26px 0 0 23px; }
.phone .posts--first { padding: 35px 149px 0 134px; }
.phone .posts--second { padding: 57px 143px 0 140px; }
.phone .posts--third { padding: 46px 137px 0 146px; }
.phone .posts--fourth { padding: 50px 135px 0 148px; }
.phone .posts--first .delete { margin-top: 5px; }
.phone .posts--second .delete { margin-top: 18px; }
.phone .posts--third .delete { margin-top: 10px; }
.phone .pager { padding: 33px 0 56px 26px; }
.phone .site-footer { margin: 0 -3px 0 -7px; padding: 64px 0 50px; box-shadow: 0 0 0 1px #fff; }
.phone .signup p { box-sizing: content-box; width: 490px; padding-left: 14px; }
.phone .signup a { margin-top: 31px; padding-left: 28px; }
.phone .social { padding: 61px 0 0 26px; }
.logo--small { width: 87px; height: 69px; margin-right: -16px; }
.phone .legal { margin-top: 37px; padding-left: 22px; }
.phone .owner { margin-top: 9px; padding-left: 24px; }
```
